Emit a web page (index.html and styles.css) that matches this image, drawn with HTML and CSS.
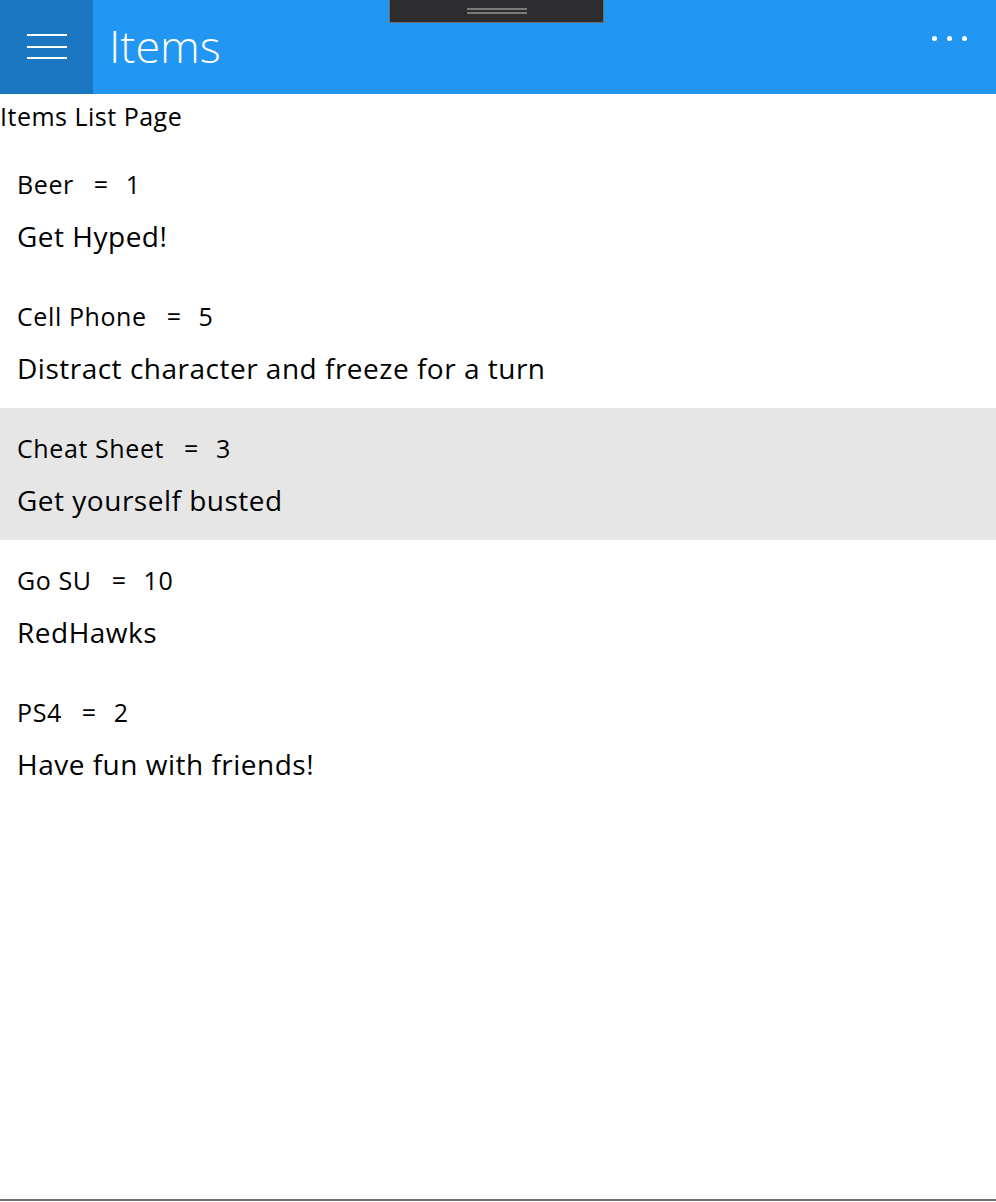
FILE: index.html
```html
<!DOCTYPE html>
<html>
<head>
<meta charset="utf-8">
<link rel="stylesheet" href="styles.css">
</head>
<body>
<div class="app">
  <header class="topbar">
    <div class="menu-btn">
      <svg width="40" height="26" viewBox="0 0 40 26"><rect x="0" y="0" width="40" height="2" fill="#fff"/><rect x="0" y="12" width="40" height="2" fill="#fff"/><rect x="0" y="23" width="40" height="2" fill="#fff"/></svg>
    </div>
    <h1 class="title">Items</h1>
    <div class="more">
      <span class="dot"></span><span class="dot"></span><span class="dot"></span>
    </div>
    <div class="tab"><span class="grip"></span><span class="grip"></span></div>
  </header>
  <main class="content">
    <div class="page-label">Items List Page</div>
    <ul class="list">
      <li class="row">
        <div class="head"><span>Beer</span><span class="eq">=</span><span>1</span></div>
        <div class="desc">Get Hyped!</div>
      </li>
      <li class="row">
        <div class="head"><span>Cell Phone</span><span class="eq">=</span><span>5</span></div>
        <div class="desc">Distract character and freeze for a turn</div>
      </li>
      <li class="row selected">
        <div class="head"><span>Cheat Sheet</span><span class="eq">=</span><span>3</span></div>
        <div class="desc">Get yourself busted</div>
      </li>
      <li class="row">
        <div class="head"><span>Go SU</span><span class="eq">=</span><span>10</span></div>
        <div class="desc">RedHawks</div>
      </li>
      <li class="row">
        <div class="head"><span>PS4</span><span class="eq">=</span><span>2</span></div>
        <div class="desc">Have fun with friends!</div>
      </li>
    </ul>
  </main>
  <div class="bottom-line"></div>
</div>
</body>
</html>
```
FILE: styles.css
```css
html, body {
  margin: 0;
  padding: 0;
  background: #fff;
  font-family: "Open Sans", "Noto Sans", sans-serif;
  color: #000;
}
.app {
  width: 996px;
  height: 1202px;
  display: flex;
  flex-direction: column;
  position: relative;
  overflow: hidden;
}
.topbar {
  height: 94px;
  background: #2196f3;
  display: flex;
  align-items: center;
  position: relative;
  flex: none;
}
.menu-btn {
  width: 93px;
  height: 94px;
  background: #1c77c3;
  display: flex;
  align-items: center;
  justify-content: center;
  flex: none;
}
.title {
  margin: 0 0 0 16px;
  font-weight: 300;
  font-size: 45px;
  color: #fff;
  line-height: 1;
  flex: 1;
  padding-bottom: 4px;
}
.more {
  display: flex;
  gap: 10px;
  padding-right: 29px;
  align-self: flex-start;
  padding-top: 36px;
}
.dot {
  width: 5px;
  height: 5px;
  border-radius: 50%;
  background: #fff;
}
.tab {
  position: absolute;
  left: 389px;
  top: -1px;
  width: 215px;
  height: 24px;
  background: #2d2d30;
  border: 1px solid #6e6e6e;
  display: flex;
  flex-direction: column;
  align-items: center;
  justify-content: flex-end;
  gap: 2px;
  padding-bottom: 8px;
  box-sizing: border-box;
}
.grip {
  width: 60px;
  height: 2px;
  background: #7a7a7a;
}
.content {
  flex: 1;
}
.page-label {
  font-size: 25px;
  line-height: 30px;
  height: 50px;
  padding-top: 7px;
  box-sizing: border-box;
  letter-spacing: 0.5px;
}
.list {
  list-style: none;
  margin: 0;
  padding: 0;
}
.row {
  height: 132px;
  padding: 22px 0 0 17px;
  box-sizing: border-box;
}
.row.selected {
  background: #e6e6e6;
}
.head {
  font-size: 25px;
  line-height: 36px;
  letter-spacing: 0.6px;
}
.head .eq {
  margin: 0 17px 0 20px;
}
.desc {
  font-size: 28px;
  line-height: 36px;
  margin-top: 16px;
  letter-spacing: 0.5px;
}
.bottom-line {
  position: absolute;
  left: 0;
  right: 0;
  bottom: 1px;
  height: 2px;
  background: #707070;
}
```
